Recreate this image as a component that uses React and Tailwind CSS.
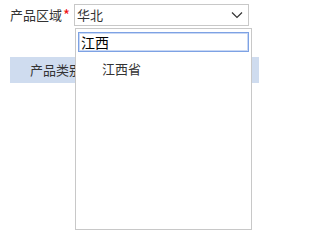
export default function App() {
  return (
    <div className="relative w-[259px] h-[238px] bg-white text-[13px] text-[#333] overflow-hidden" style={{ fontFamily: '"Microsoft YaHei", "Noto Sans CJK SC", sans-serif' }}>
      {/* Region row */}
      <div className="flex items-center pt-[4px] pl-[10px]">
        <span className="w-[52px] leading-[22px]">产品区域</span>
        <span className="w-[12px] text-[#f01010] text-[15px] leading-[22px] pl-[1px]">*</span>
        <div className="flex items-center justify-between w-[175px] h-[22px] border border-[#c8c8c8] pl-[2px] pr-[5px]">
          <span className="leading-[20px]">华北</span>
          <svg width="12" height="8" viewBox="0 0 12 8" className="text-[#333]">
            <polyline points="1,1.5 6,6.5 11,1.5" fill="none" stroke="currentColor" strokeWidth="1.2" />
          </svg>
        </div>
      </div>

      {/* Category bar */}
      <div className="mt-[31px] ml-[10px] h-[26px] bg-[#cfdcef] flex items-center pl-[20px]">
        <span>产品类别</span>
      </div>

      {/* Dropdown */}
      <div className="absolute left-[75px] top-[28px] w-[177px] h-[202px] bg-white border border-[#c8c8c8] pt-[3px] px-[2px]">
        <div className="h-[20px] border border-[#7da2e4] shadow-[0_0_0_1px_#c9d8f4_inset] flex items-center pl-[2px] text-[14px] text-black">
          江西
        </div>
        <div className="mt-[8px] pl-[24px] leading-[18px]">江西省</div>
      </div>
    </div>
  );
}
